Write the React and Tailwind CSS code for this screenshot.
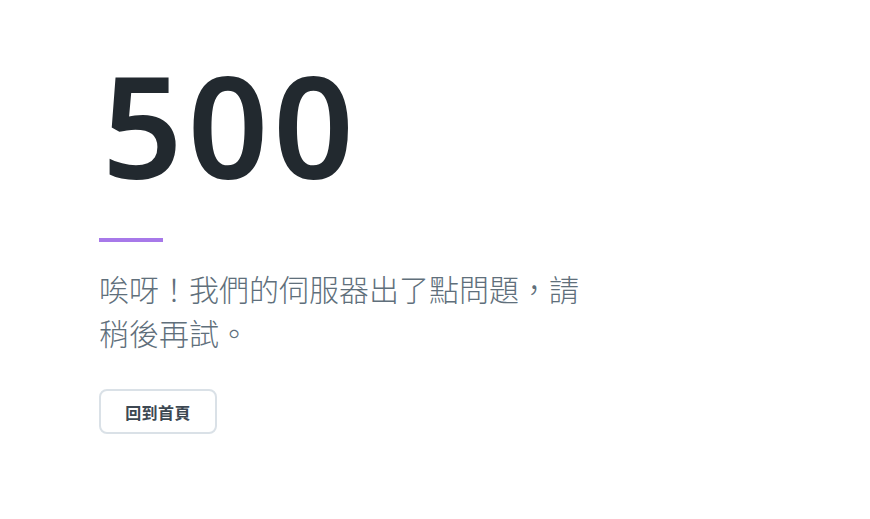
import React from 'react';

// Server error page: big code, accent bar, message and a back-home button
export default function App() {
  return (
    <div className="min-h-screen w-full bg-white">
      <div className="flex flex-col items-start pl-[99px] pt-[41px]">
        <h1
          className="ml-[3px] text-[141px] leading-[166px] font-semibold tracking-[5px] text-[#22292f]"
          style={{ fontFamily: '"Noto Sans", "Open Sans", sans-serif' }}
        >
          500
        </h1>
        <div className="mt-[31px] h-1 w-16 bg-[#a779e9]" />
        <p
          className="mt-[24px] w-[490px] text-[30px] leading-[44px] font-light text-[#606f7b]"
          style={{ fontFamily: '"Noto Sans CJK TC", "Noto Sans", sans-serif' }}
        >
          唉呀！我們的伺服器出了點問題，請稍後再試。
        </p>
        <button
          type="button"
          className="mt-[35px] flex h-[45px] w-[118px] items-center justify-center rounded-lg border-2 border-[#dae1e7] bg-transparent text-[16px] font-bold tracking-wide text-[#3d4852]"
          style={{ fontFamily: '"Noto Sans CJK TC", "Noto Sans", sans-serif' }}
        >
          回到首頁
        </button>
      </div>
    </div>
  );
}
